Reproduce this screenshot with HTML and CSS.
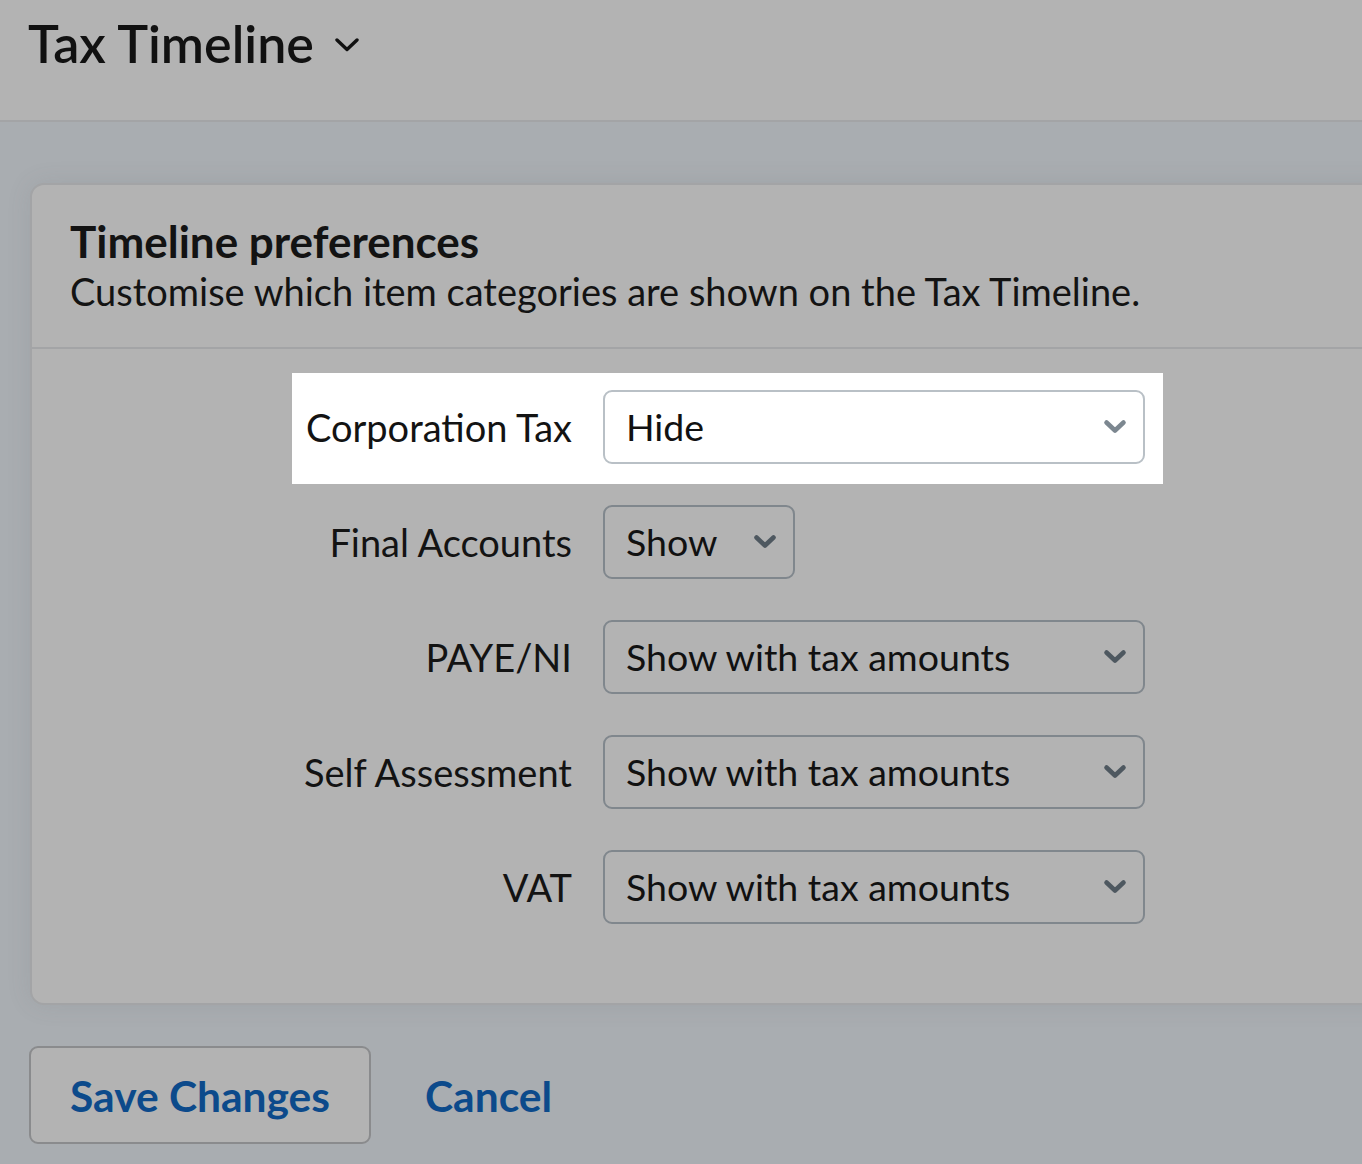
FILE: index.html
```html
<!DOCTYPE html>
<html lang="en">
<head>
<meta charset="utf-8">
<title>Tax Timeline</title>
<link rel="stylesheet" href="styles.css">
</head>
<body>
<header class="topbar">
  <h1 class="page-title">Tax Timeline
    <svg class="title-chevron" viewBox="0 0 24 14" width="24" height="14"><path d="M2 2 L12 11.5 L22 2" fill="none" stroke="#111" stroke-width="3.4" stroke-linecap="round" stroke-linejoin="round"/></svg>
  </h1>
</header>
<main class="content">
  <section class="card">
    <div class="card-head">
      <h2 class="card-title">Timeline preferences</h2>
      <p class="card-sub">Customise which item categories are shown on the Tax Timeline.</p>
    </div>
    <div class="card-body">
      <div class="row row-highlight">
        <span class="label">Corporation Tax</span>
        <div class="select select-light select-wide"><span>Hide</span><svg class="chev" viewBox="0 0 24 15" width="24" height="15"><path d="M3.5 3.5 L12 11.5 L20.5 3.5" fill="none" stroke-width="4.6" stroke-linecap="round" stroke-linejoin="round"/></svg></div>
      </div>
      <div class="row">
        <span class="label">Final Accounts</span>
        <div class="select select-narrow"><span>Show</span><svg class="chev" viewBox="0 0 24 15" width="24" height="15"><path d="M3.5 3.5 L12 11.5 L20.5 3.5" fill="none" stroke-width="4.6" stroke-linecap="round" stroke-linejoin="round"/></svg></div>
      </div>
      <div class="row">
        <span class="label">PAYE/NI</span>
        <div class="select select-wide"><span>Show with tax amounts</span><svg class="chev" viewBox="0 0 24 15" width="24" height="15"><path d="M3.5 3.5 L12 11.5 L20.5 3.5" fill="none" stroke-width="4.6" stroke-linecap="round" stroke-linejoin="round"/></svg></div>
      </div>
      <div class="row">
        <span class="label">Self Assessment</span>
        <div class="select select-wide"><span>Show with tax amounts</span><svg class="chev" viewBox="0 0 24 15" width="24" height="15"><path d="M3.5 3.5 L12 11.5 L20.5 3.5" fill="none" stroke-width="4.6" stroke-linecap="round" stroke-linejoin="round"/></svg></div>
      </div>
      <div class="row">
        <span class="label">VAT</span>
        <div class="select select-wide"><span>Show with tax amounts</span><svg class="chev" viewBox="0 0 24 15" width="24" height="15"><path d="M3.5 3.5 L12 11.5 L20.5 3.5" fill="none" stroke-width="4.6" stroke-linecap="round" stroke-linejoin="round"/></svg></div>
      </div>
    </div>
  </section>
  <div class="actions">
    <button class="btn-save" type="button">Save Changes</button>
    <a class="link-cancel" href="#">Cancel</a>
  </div>
</main>
</body>
</html>
```
FILE: styles.css
```css
* { box-sizing: border-box; }
html, body { margin: 0; padding: 0; }
body {
  background: #a9adb1;
  font-family: Lato, "Open Sans", sans-serif;
  color: #131313;
  overflow: hidden;
  width: 1362px;
  height: 1164px;
}
.topbar {
  height: 122px;
  background: #b3b3b3;
  border-bottom: 2px solid #a3a4a6;
  padding: 13px 0 0 28px;
}
.page-title {
  margin: 0;
  font-size: 52px;
  font-weight: 600;
  line-height: 60px;
  display: flex;
  align-items: center;
  gap: 21px;
  color: #111;
}
.title-chevron { margin-top: 4px; }
.content {
  padding: 61px 0 0 30px;
}
.card {
  margin-right: -40px;
  background: #b3b3b3;
  border: 2px solid #a3a4a6;
  border-radius: 14px;
  box-shadow: 0 0 24px rgba(90, 95, 100, 0.12);
}
.card-head {
  padding: 31px 38px 31px;
  border-bottom: 2px solid #a3a4a6;
}
.card-title {
  margin: 0;
  font-size: 44px;
  font-weight: 700;
  line-height: 50px;
}
.card-sub {
  margin: 0;
  font-size: 38px;
  line-height: 50px;
}
.card-body {
  padding: 41px 0 79px 270px;
  display: flex;
  flex-direction: column;
  gap: 41px;
}
.row {
  display: grid;
  grid-template-columns: 270px auto;
  column-gap: 31px;
  align-items: center;
  justify-content: start;
}
.row-highlight {
  background: #fff;
  padding: 17px 18px 20px 10px;
  margin: -17px 0 -20px -10px;
  width: max-content;
  position: relative;
}
.label {
  text-align: right;
  font-size: 38px;
  white-space: nowrap;
}
.select {
  height: 74px;
  border: 2px solid #80878d;
  border-radius: 9px;
  display: flex;
  align-items: center;
  justify-content: space-between;
  padding: 0 16px 2px 21px;
  font-size: 37.5px;
  color: #111;
}
.select .chev { stroke: #4e5860; flex: none; }
.select-light { border-color: #b9c0c6; background: #fff; }
.select-light .chev { stroke: #7c8790; }
.select-wide { width: 542px; }
.select-narrow { width: 192px; }
.actions {
  display: flex;
  align-items: center;
  gap: 54px;
  margin-top: 41px;
}
.btn-save {
  margin-left: -1px;
  width: 342px;
  height: 98px;
  background: #b3b3b3;
  border: 2px solid #8a8b8d;
  border-radius: 9px;
  font-family: inherit;
  font-size: 42.5px;
  font-weight: 700;
  color: #0c4a8b;
  padding: 0;
}
.link-cancel {
  font-size: 42.5px;
  font-weight: 700;
  color: #0c4a8b;
  text-decoration: none;
}
```
